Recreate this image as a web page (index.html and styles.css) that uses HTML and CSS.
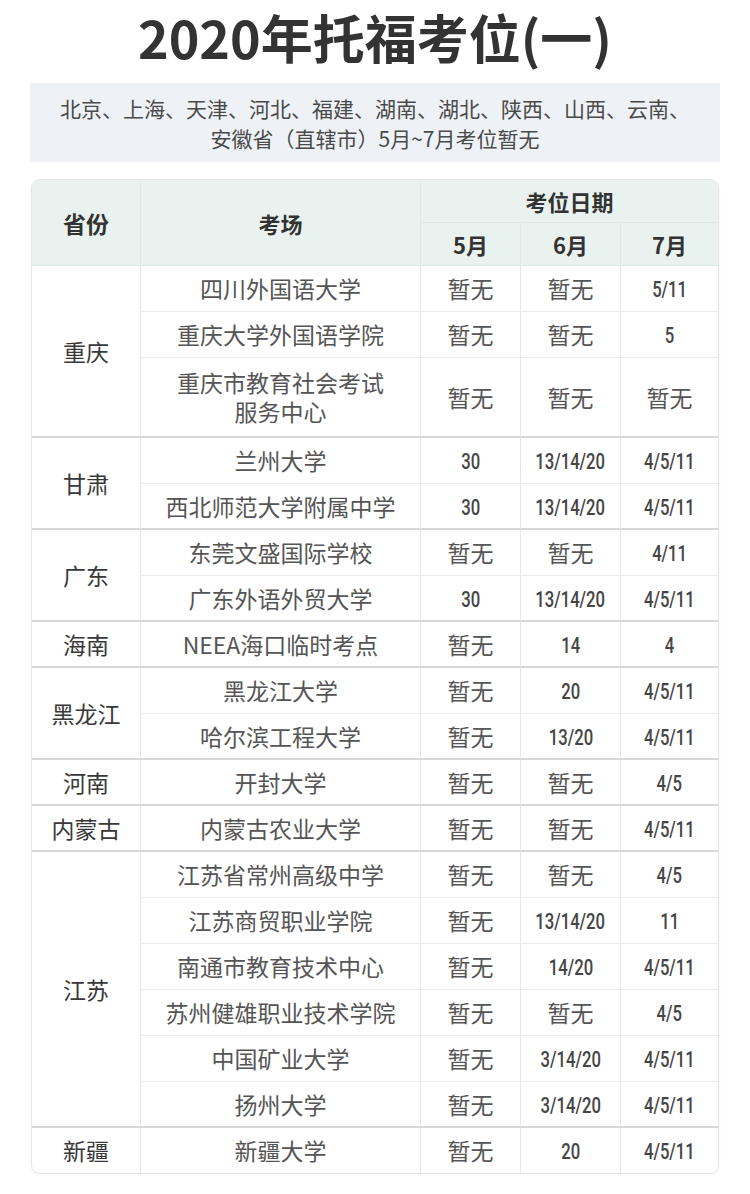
FILE: index.html
```html
<!DOCTYPE html>
<html lang="zh-CN">
<head>
<meta charset="utf-8">
<title>2020年托福考位(一)</title>
<link rel="stylesheet" href="styles.css">
</head>
<body>
<h1 class="title">2020年托福考位(一)</h1>
<div class="note">北京、上海、天津、河北、福建、湖南、湖北、陕西、山西、云南、<br>安徽省（直辖市）5月~7月考位暂无</div>
<div class="card">
<table class="grid">
<colgroup>
<col class="c-prov"><col class="c-site"><col class="c-m"><col class="c-m"><col class="c-m7">
</colgroup>
<thead>
<tr class="h1r"><th rowspan="2" class="hp">省份</th><th rowspan="2">考场</th><th colspan="3" class="last">考位日期</th></tr>
<tr class="h2r"><th>5月</th><th>6月</th><th class="last">7月</th></tr>
</thead>
<tbody>
<tr><td rowspan="3" class="prov g">重庆</td><td>四川外国语大学</td><td>暂无</td><td>暂无</td><td class="last"><span class="n">5/11</span></td></tr>
<tr><td>重庆大学外国语学院</td><td>暂无</td><td>暂无</td><td class="last"><span class="n">5</span></td></tr>
<tr class="tall g"><td class="two">重庆市教育社会考试<br>服务中心</td><td>暂无</td><td>暂无</td><td class="last">暂无</td></tr>

<tr><td rowspan="2" class="prov g">甘肃</td><td>兰州大学</td><td><span class="n">30</span></td><td><span class="n">13/14/20</span></td><td class="last"><span class="n">4/5/11</span></td></tr>
<tr class="g"><td>西北师范大学附属中学</td><td><span class="n">30</span></td><td><span class="n">13/14/20</span></td><td class="last"><span class="n">4/5/11</span></td></tr>

<tr><td rowspan="2" class="prov g">广东</td><td>东莞文盛国际学校</td><td>暂无</td><td>暂无</td><td class="last"><span class="n">4/11</span></td></tr>
<tr class="g"><td>广东外语外贸大学</td><td><span class="n">30</span></td><td><span class="n">13/14/20</span></td><td class="last"><span class="n">4/5/11</span></td></tr>

<tr class="g"><td class="prov">海南</td><td>NEEA海口临时考点</td><td>暂无</td><td><span class="n">14</span></td><td class="last"><span class="n">4</span></td></tr>

<tr><td rowspan="2" class="prov g">黑龙江</td><td>黑龙江大学</td><td>暂无</td><td><span class="n">20</span></td><td class="last"><span class="n">4/5/11</span></td></tr>
<tr class="g"><td>哈尔滨工程大学</td><td>暂无</td><td><span class="n">13/20</span></td><td class="last"><span class="n">4/5/11</span></td></tr>

<tr class="g"><td class="prov">河南</td><td>开封大学</td><td>暂无</td><td>暂无</td><td class="last"><span class="n">4/5</span></td></tr>

<tr class="g"><td class="prov">内蒙古</td><td>内蒙古农业大学</td><td>暂无</td><td>暂无</td><td class="last"><span class="n">4/5/11</span></td></tr>

<tr><td rowspan="6" class="prov g">江苏</td><td>江苏省常州高级中学</td><td>暂无</td><td>暂无</td><td class="last"><span class="n">4/5</span></td></tr>
<tr><td>江苏商贸职业学院</td><td>暂无</td><td><span class="n">13/14/20</span></td><td class="last"><span class="n">11</span></td></tr>
<tr><td>南通市教育技术中心</td><td>暂无</td><td><span class="n">14/20</span></td><td class="last"><span class="n">4/5/11</span></td></tr>
<tr><td>苏州健雄职业技术学院</td><td>暂无</td><td>暂无</td><td class="last"><span class="n">4/5</span></td></tr>
<tr><td>中国矿业大学</td><td>暂无</td><td><span class="n">3/14/20</span></td><td class="last"><span class="n">4/5/11</span></td></tr>
<tr class="g"><td>扬州大学</td><td>暂无</td><td><span class="n">3/14/20</span></td><td class="last"><span class="n">4/5/11</span></td></tr>

<tr class="end"><td class="prov">新疆</td><td>新疆大学</td><td>暂无</td><td><span class="n">20</span></td><td class="last"><span class="n">4/5/11</span></td></tr>
</tbody>
</table>
</div>
</body>
</html>
```
FILE: styles.css
```css
* { box-sizing: border-box; }
html, body { margin: 0; padding: 0; background: #ffffff; }
body {
  font-family: "Noto Sans CJK SC", "Noto Sans", sans-serif;
  color: #555;
  width: 750px;
}
.title {
  margin: 0;
  height: 74px;
  line-height: 74px;
  text-align: center;
  font-size: 52px;
  font-weight: 700;
  color: #333;
}
.note {
  margin: 9px 30px 0 30px;
  padding: 10px 0 9px;
  background: #eef2f6;
  text-align: center;
  font-size: 21px;
  line-height: 30px;
  color: #4a4a4a;
}
.card {
  margin: 17px 31px 0 31px;
  border: 1px solid #e4e6e5;
  border-radius: 9px;
  overflow: hidden;
  box-shadow: 0 1px 3px rgba(0,0,0,0.06);
}
.grid {
  width: 100%;
  border-collapse: separate;
  border-spacing: 0;
  table-layout: fixed;
}
.c-prov { width: 109px; }
.c-site { width: 280px; }
.c-m { width: 100px; }
.c-m7 { width: auto; }
.grid th {
  background: #e9f2ee;
  color: #333;
  font-weight: 700;
  font-size: 22px;
  text-align: center;
  border-right: 1px solid #dfe8e3;
  border-bottom: 1px solid #dfe8e3;
  padding: 0;
}
.grid th.hp { font-size: 23px; }
.h1r { height: 43px; }
.h2r { height: 43px; }
.grid th.last, .grid td.last { border-right: none; }
.grid td {
  text-align: center;
  vertical-align: middle;
  font-size: 23px;
  line-height: 29px;
  color: #555;
  border-right: 1px solid #e6e6e6;
  border-bottom: 1px solid #ececec;
  padding: 0;
  white-space: nowrap;
}
.grid tbody tr { height: 46px; }
.grid tbody tr.tall { height: 80px; }
.grid tbody tr.g td, .grid td.g { border-bottom: 2px solid #d7d7d7; }
.grid tbody tr.end { height: 45px; }
.grid tbody tr.end td { border-bottom: none; }
.grid td.prov {
  color: #383838;
  font-weight: 400;
}
.n {
  display: inline-block;
  font-family: "Roboto", "DejaVu Sans Condensed", sans-serif;
  font-weight: 500;
  font-size: 22.5px;
  color: #454545;
  transform: scaleX(0.74);
  transform-origin: center;
}
```
